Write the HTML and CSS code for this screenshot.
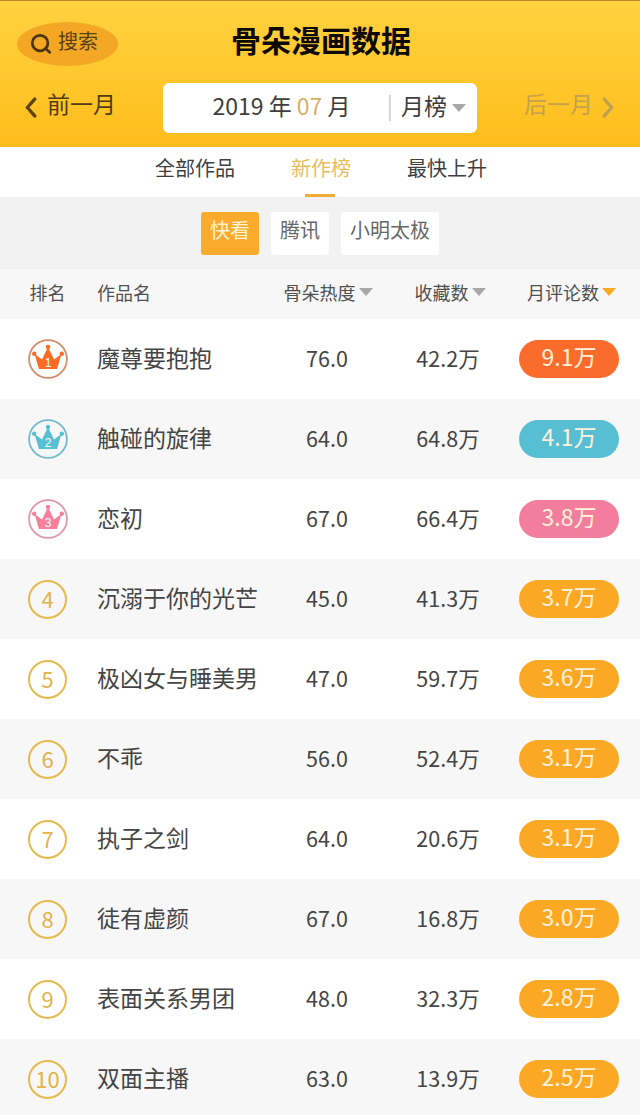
FILE: index.html
```html
<!DOCTYPE html>
<html lang="zh">
<head>
<meta charset="utf-8">
<title>骨朵漫画数据</title>
<link rel="stylesheet" href="styles.css">
</head>
<body>
<svg class="defs" width="0" height="0" aria-hidden="true">
  <defs>
    <g id="crown">
      <path d="M11 30 L6.500 15 L14 20.500 L20 8 L26 20.500 L33.500 15 L29 30Z"/>
      <circle cx="6.200" cy="14.800" r="2.200"/><circle cx="20" cy="8" r="2.200"/><circle cx="33.800" cy="14.800" r="2.200"/>
    </g>
    <path id="arrow" d="M0 0H14L7 8Z"/>
  </defs>
</svg>
<header class="top">
  <div class="top-row">
    <div class="search">
      <svg class="search-icon" viewBox="0 0 24 24"><circle cx="11" cy="11" r="8.500"/><path d="M17 17l4.500 4"/></svg>
      <span>搜索</span>
    </div>
    <h1 class="title">骨朵漫画数据</h1>
    <div></div>
  </div>
  <div class="nav-row">
    <div class="nav nav-prev">
      <svg class="chev" viewBox="0 0 12 20"><path d="M10 2L3 10l7 8"/></svg>
      <span>前一月</span>
    </div>
    <div class="date-box">
      <div class="date">2019 年 <em>07</em> 月</div>
      <div class="period"><span>月榜</span><svg class="arrow" viewBox="0 0 14 8"><use href="#arrow"/></svg></div>
    </div>
    <div class="nav nav-next">
      <span>后一月</span>
      <svg class="chev" viewBox="0 0 12 20"><path d="M2 2l7 8-7 8"/></svg>
    </div>
  </div>
</header>
<nav class="tabs">
  <a class="tab">全部作品</a>
  <a class="tab tab-on">新作榜</a>
  <a class="tab">最快上升</a>
</nav>
<div class="filters">
  <a class="chip chip-on">快看</a>
  <a class="chip">腾讯</a>
  <a class="chip">小明太极</a>
</div>
<div class="row head">
  <div class="c-rank">排名</div>
  <div class="c-title">作品名</div>
  <div class="c-num">骨朵热度<svg class="arrow" viewBox="0 0 14 8"><use href="#arrow"/></svg></div>
  <div class="c-num">收藏数<svg class="arrow" viewBox="0 0 14 8"><use href="#arrow"/></svg></div>
  <div class="c-num">月评论数<svg class="arrow arrow-on" viewBox="0 0 14 8"><use href="#arrow"/></svg></div>
</div>
<main>
  <div class="row item">
    <div class="c-rank"><svg class="medal m1" viewBox="0 0 40 40"><circle class="ring" cx="20" cy="20" r="18.900"/><use href="#crown"/><text x="20" y="28">1</text></svg></div>
    <div class="name">魔尊要抱抱</div><div class="val">76.0</div><div class="val">42.2万</div>
    <div class="c-pill"><span class="pill p1">9.1万</span></div>
  </div>
  <div class="row item">
    <div class="c-rank"><svg class="medal m2" viewBox="0 0 40 40"><circle class="ring" cx="20" cy="20" r="18.900"/><use href="#crown"/><text x="20" y="28">2</text></svg></div>
    <div class="name">触碰的旋律</div><div class="val">64.0</div><div class="val">64.8万</div>
    <div class="c-pill"><span class="pill p2">4.1万</span></div>
  </div>
  <div class="row item">
    <div class="c-rank"><svg class="medal m3" viewBox="0 0 40 40"><circle class="ring" cx="20" cy="20" r="18.900"/><use href="#crown"/><text x="20" y="28">3</text></svg></div>
    <div class="name">恋初</div><div class="val">67.0</div><div class="val">66.4万</div>
    <div class="c-pill"><span class="pill p3">3.8万</span></div>
  </div>
  <div class="row item">
    <div class="c-rank"><span class="rank">4</span></div>
    <div class="name">沉溺于你的光芒</div><div class="val">45.0</div><div class="val">41.3万</div>
    <div class="c-pill"><span class="pill">3.7万</span></div>
  </div>
  <div class="row item">
    <div class="c-rank"><span class="rank">5</span></div>
    <div class="name">极凶女与睡美男</div><div class="val">47.0</div><div class="val">59.7万</div>
    <div class="c-pill"><span class="pill">3.6万</span></div>
  </div>
  <div class="row item">
    <div class="c-rank"><span class="rank">6</span></div>
    <div class="name">不乖</div><div class="val">56.0</div><div class="val">52.4万</div>
    <div class="c-pill"><span class="pill">3.1万</span></div>
  </div>
  <div class="row item">
    <div class="c-rank"><span class="rank">7</span></div>
    <div class="name">执子之剑</div><div class="val">64.0</div><div class="val">20.6万</div>
    <div class="c-pill"><span class="pill">3.1万</span></div>
  </div>
  <div class="row item">
    <div class="c-rank"><span class="rank">8</span></div>
    <div class="name">徒有虚颜</div><div class="val">67.0</div><div class="val">16.8万</div>
    <div class="c-pill"><span class="pill">3.0万</span></div>
  </div>
  <div class="row item">
    <div class="c-rank"><span class="rank">9</span></div>
    <div class="name">表面关系男团</div><div class="val">48.0</div><div class="val">32.3万</div>
    <div class="c-pill"><span class="pill">2.8万</span></div>
  </div>
  <div class="row item">
    <div class="c-rank"><span class="rank">10</span></div>
    <div class="name">双面主播</div><div class="val">63.0</div><div class="val">13.9万</div>
    <div class="c-pill"><span class="pill">2.5万</span></div>
  </div>
</main>
</body>
</html>
```
FILE: styles.css
```css
* { box-sizing: border-box; }
html, body { margin: 0; padding: 0; }
body {
  width: 640px;
  height: 1115px;
  overflow: hidden;
  background: #fff;
  color: #3c3c3c;
  font-family: "Noto Sans CJK SC", "Noto Sans", sans-serif;
}
.defs { position: absolute; }

.top {
  height: 147px;
  background: linear-gradient(180deg, #ffd23f 0%, #ffbd1b 100%);
  border-top: 1px solid #b98a2a;
}
.top-row {
  display: grid;
  grid-template-columns: 1fr auto 1fr;
  align-items: center;
  height: 82px;
  padding: 0 17px;
}
.search {
  display: flex;
  align-items: center;
  gap: 6px;
  width: 101px;
  height: 44px;
  padding-left: 13px;
  margin-top: 3px;
  border-radius: 50%;
  background: #f3a724;
  color: #5a4016;
  font-size: 20px;
}
.search span { margin-top: -6px; }
.search-icon {
  width: 22px;
  height: 22px;
  margin-top: 1px;
  fill: none;
  stroke: #4d3410;
  stroke-width: 3;
  stroke-linecap: round;
}
.title {
  margin: 0 0 0 2px;
  padding-bottom: 6px;
  color: #0d0a04;
  font-size: 30px;
  line-height: 40px;
  font-weight: 700;
}
.nav-row {
  display: grid;
  grid-template-columns: 163px 314px 163px;
  align-items: center;
  height: 50px;
}
.nav {
  display: flex;
  align-items: center;
  gap: 10px;
  font-size: 23px;
  line-height: 30px;
  margin-top: -10px;
}
.nav-prev { padding-left: 24px; color: #4e3b17; }
.nav-next { padding-left: 47px; gap: 9px; color: #c3a14e; }
.chev {
  width: 13px;
  height: 21px;
  margin-top: 9px;
  fill: none;
  stroke-width: 3.200;
  stroke-linecap: round;
  stroke-linejoin: round;
}
.nav-prev .chev { stroke: #5f4412; }
.nav-next .chev { stroke: #bd9f55; }
.date-box {
  display: flex;
  align-items: center;
  height: 50px;
  background: #fff;
  border-radius: 6px;
  font-size: 23px;
  color: #3e3e3e;
}
.date {
  width: 228px;
  height: 26px;
  line-height: 20px;
  padding-left: 11px;
  text-align: center;
  border-right: 2px solid #d6d6d6;
  white-space: nowrap;
}
.date em { font-style: normal; color: #d8b066; }
.period {
  display: flex;
  align-items: center;
  padding-left: 10px;
}
.period span { margin-top: -6px; }
.period .arrow { margin-left: 5px; }

.arrow {
  width: 14px;
  height: 8px;
  margin-left: 3px;
  fill: #a8a8a8;
}
.arrow-on { fill: #f9a825; }

.tabs {
  display: flex;
  justify-content: center;
  height: 50px;
  padding-left: 2px;
  background: #fff;
}
.tab {
  position: relative;
  margin: 0 28px;
  font-size: 20px;
  line-height: 42px;
  color: #3f3f3f;
}
.tab-on { color: #e9bd5c; }
.tab-on::after {
  content: "";
  position: absolute;
  left: 14px;
  right: 16px;
  bottom: 0;
  height: 3px;
  background: #f0ac35;
}
.filters {
  display: flex;
  justify-content: center;
  gap: 12px;
  height: 71px;
  padding-top: 15px;
  background: #f2f2f2;
}
.chip {
  height: 43px;
  padding: 0 9px;
  border-radius: 3px;
  background: #fff;
  color: #666;
  font-size: 20px;
  line-height: 36px;
}
.chip-on { background: #fbab2b; color: #fff3d9; }

.row {
  display: grid;
  grid-template-columns: 95px 172px 120px 122px 124px;
  align-items: center;
}
.head {
  height: 51px;
  padding-bottom: 5px;
  background: #f7f7f7;
  border-top: 1px solid #ececec;
  color: #505050;
  font-size: 18px;
}
.c-title { padding-left: 2px; }
.c-rank { display: flex; justify-content: center; }
.c-num { display: flex; align-items: center; justify-content: center; }
.head .c-num:nth-child(3) { padding-left: 2px; }
.head .c-num:nth-child(4) { padding-left: 4px; }
.head .c-num:nth-child(5) { padding-left: 1px; }
.item { height: 80px; color: #444; }
.item:nth-child(even) { background: #f7f7f7; }
.name {
  padding: 0 0 4px 2px;
  font-size: 23px;
  white-space: nowrap;
}
.val {
  padding-bottom: 4px;
  font-size: 21.500px;
  text-align: center;
}
.c-pill { display: flex; justify-content: center; padding-right: 4px; }

.rank {
  width: 39px;
  height: 39px;
  border: 2px solid #e6b84e;
  border-radius: 50%;
  color: #e2b34a;
  font-size: 22px;
  line-height: 33px;
  text-align: center;
}
.medal { width: 40px; height: 40px; }
.medal text {
  fill: #fff;
  font-family: "Liberation Sans", sans-serif;
  font-size: 12px;
  text-anchor: middle;
}
.ring { fill: none; stroke-width: 1.800; }
.m1 { fill: #fb6b24; }
.m1 .ring { stroke: #d98a66; }
.m2 { fill: #58c0d4; }
.m2 .ring { stroke: #70bccb; }
.m3 { fill: #f57f9d; }
.m3 .ring { stroke: #e097a9; }
.pill {
  width: 100px;
  height: 38px;
  border-radius: 19px;
  background: #fba925;
  color: #fff2dc;
  font-size: 23px;
  line-height: 33px;
  text-align: center;
}
.p1 { background: #fb6b2b; }
.p2 { background: #58bfd3; }
.p3 { background: #f27d9c; }
```
